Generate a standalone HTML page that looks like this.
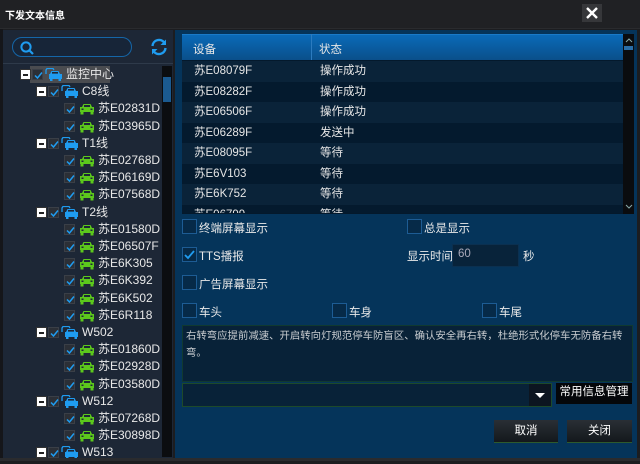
<!DOCTYPE html>
<html><head><meta charset="utf-8"><style>
*{margin:0;padding:0;box-sizing:border-box}
body{width:640px;height:461px;background:#1c1d20;position:relative;overflow:hidden;font-family:"Liberation Sans","Noto Sans CJK SC",sans-serif;color:#e6e6e6;font-size:12px}
.a{position:absolute}
.title{left:0;top:0;width:640px;height:29px;background:#202124;border-bottom:1px solid #2a2b2e}
.left{left:3px;top:30px;width:170px;height:428px;background:#1d2736}
.right{left:175px;top:30px;width:462px;height:428px;background:#05345a}
.row{position:absolute;height:17px;line-height:17px;font-size:12px;color:#e8e8e8;white-space:nowrap}
.mb{position:absolute;width:11px;height:11px;background:#fff;border:1px solid #333;top:3px}
.mb:after{content:"";position:absolute;left:2px;top:4px;width:5px;height:2px;background:#222}
.cb{position:absolute;width:11px;height:11px;background:#2b2f36;border:1px solid #3a3f47;top:3px}
.cb svg{position:absolute;left:0;top:0}
.tr{position:absolute;left:182px;width:441px;height:20.5px;line-height:20px;font-size:11.5px}
.tr span{position:absolute}
.ck{position:absolute;width:15px;height:15px;border:1px solid #1d5c94;background:#062a48}
.lbl{position:absolute;font-size:11.5px;color:#e8e8e8}
.btn{position:absolute;height:23px;background:linear-gradient(#2a2f35,#14181c);border-bottom:1px solid #2d5a2d;color:#fff;text-align:center;line-height:22px;font-size:11.5px}
</style></head><body>
<div class="a title"></div>
<div class="a" style="left:5px;top:7px;font-size:10px;color:#fff;font-weight:bold">下发文本信息</div>
<div class="a" style="left:582px;top:4px;width:20px;height:18px;background:#36373a"></div>
<svg class="a" style="left:584px;top:5px" width="16" height="16"><path d="M3 3L13 13M13 3L3 13" stroke="#fff" stroke-width="2.4"/></svg>
<div class="a" style="left:0;top:29px;width:3px;height:432px;background:#15161a"></div>
<div class="a left"></div>
<div class="a right"></div>
<div class="a" style="left:12px;top:37px;width:120px;height:20px;border:1.5px solid #1566a8;border-radius:10px;background:#172538"></div>
<svg class="a" style="left:19px;top:40px" width="16" height="16"><circle cx="7" cy="7" r="4.6" stroke="#1f9cf0" stroke-width="2" fill="none"/><path d="M10.5 10.5L14 14" stroke="#1f9cf0" stroke-width="2.2"/></svg>
<svg class="a" style="left:149px;top:37px" width="20" height="20"><path d="M3.5 9A6.5 6.5 0 0 1 15.5 6" stroke="#1f9cf0" stroke-width="2.4" fill="none"/><path d="M17 2.5L17 8L11.5 8Z" fill="#1f9cf0"/><path d="M16.5 11A6.5 6.5 0 0 1 4.5 14" stroke="#1f9cf0" stroke-width="2.4" fill="none"/><path d="M3 17.5L3 12L8.5 12Z" fill="#1f9cf0"/></svg>
<div class="a" style="left:3px;top:63px;width:170px;height:1px;background:#2e3a4a"></div>
<div class="a" style="left:162px;top:66px;width:10px;height:391px;background:#0b0d10"></div>
<div class="a" style="left:163px;top:77px;width:8px;height:25px;background:#1b5a90"></div>
<div class="a" style="left:30px;top:66px;width:80px;height:17px;background:#4a4c50"></div>
<div id="tree"></div>
<!-- table -->
<div class="a" style="left:182px;top:34px;width:441px;height:180px;background:#04192c"></div>
<div class="a" style="left:182px;top:34px;width:441px;height:26px;background:linear-gradient(#0a6ab8,#0a4f8a);border-top:1px solid #1a7ac8"></div>
<div class="a" style="left:311px;top:34px;width:1px;height:26px;background:#2c7bbf"></div>
<div class="a" style="left:193px;top:41px;font-size:11.5px">设备</div>
<div class="a" style="left:319px;top:41px;font-size:11.5px">状态</div>
<div id="rows"></div>
<div class="a" style="left:623px;top:34px;width:11px;height:180px;background:#0a0c0f"></div>
<div class="a" style="left:624px;top:46px;width:9px;height:4px;background:#2a6ea8"></div>
<svg class="a" style="left:624px;top:36px" width="10" height="8"><path d="M2 6L5 3L8 6" stroke="#8aa" fill="none"/></svg>
<svg class="a" style="left:624px;top:203px" width="10" height="8"><path d="M2 2L5 5L8 2" stroke="#8aa" fill="none"/></svg>
<!-- options -->
<div class="ck" style="left:182px;top:219px"></div><div class="lbl" style="left:199px;top:220px">终端屏幕显示</div>
<div class="ck" style="left:407px;top:219px"></div><div class="lbl" style="left:424px;top:220px">总是显示</div>
<div class="ck" style="left:182px;top:247px"><svg width="13" height="13"><path d="M2 7L5 10L11 3" stroke="#1f9cf0" stroke-width="1.8" fill="none"/></svg></div><div class="lbl" style="left:199px;top:248px">TTS播报</div>
<div class="lbl" style="left:407px;top:248px">显示时间</div>
<div class="a" style="left:452px;top:244px;width:67px;height:23px;background:#08233a;border:1px solid #0b3050"></div>
<div class="lbl" style="left:458px;top:248px;color:#aab">60</div>
<div class="lbl" style="left:523px;top:248px">秒</div>
<div class="ck" style="left:182px;top:275px"></div><div class="lbl" style="left:199px;top:276px">广告屏幕显示</div>
<div class="ck" style="left:182px;top:303px"></div><div class="lbl" style="left:199px;top:304px">车头</div>
<div class="ck" style="left:332px;top:303px"></div><div class="lbl" style="left:349px;top:304px">车身</div>
<div class="ck" style="left:482px;top:303px"></div><div class="lbl" style="left:499px;top:304px">车尾</div>
<div class="a" style="left:182px;top:325px;width:451px;height:57px;background:#082238;border:1px solid #103a30"></div>
<div class="a" style="left:186px;top:328px;width:445px;font-size:10.4px;line-height:17px;color:#c8ccd0">右转弯应提前减速、开启转向灯规范停车防盲区、确认安全再右转，杜绝形式化停车无防备右转弯。</div>
<div class="a" style="left:182px;top:383px;width:370px;height:24px;background:#082238;border:1px solid #1d4a2a"></div>
<div class="a" style="left:529px;top:384px;width:22px;height:22px;background:#0c1520"></div>
<svg class="a" style="left:534px;top:392px" width="12" height="8"><path d="M1 1L11 1L6 6Z" fill="#fff"/></svg>
<div class="a" style="left:556px;top:383px;width:76px;height:21px;background:#05070a;color:#fff;font-size:11.5px;line-height:18px;text-align:center">常用信息管理</div>
<div class="btn" style="left:494px;top:420px;width:64px">取消</div>
<div class="btn" style="left:567px;top:420px;width:65px">关闭</div>
<div class="a" style="left:0;top:458px;width:640px;height:3px;background:#2a2b2e"></div>
<script>
var car='<svg width="16" height="12" viewBox="0 0 16 12"><path d="M3 4L4.5 1H11.5L13 4H15V9H1V4Z" fill="#5cc81c"/><rect x="1.5" y="9" width="3" height="2.5" fill="#5cc81c"/><rect x="11.5" y="9" width="3" height="2.5" fill="#5cc81c"/><rect x="5" y="2" width="6" height="2" fill="#1d2736"/><rect x="2.5" y="5.5" width="2" height="1.5" fill="#1d2736"/><rect x="11.5" y="5.5" width="2" height="1.5" fill="#1d2736"/></svg>';
var bus='<svg width="18" height="13" viewBox="0 0 18 13"><path d="M1 6V2L2 0.5H8L9 2" stroke="#1f9cf0" stroke-width="1.3" fill="none"/><path d="M5 6L6.5 3H13.5L15 6H17V11H4V6Z" fill="#1f9cf0"/><rect x="7" y="4" width="6" height="1.6" fill="#1d2736"/><rect x="5" y="11" width="2.5" height="2" fill="#1f9cf0"/><rect x="13.5" y="11" width="2.5" height="2" fill="#1f9cf0"/></svg>';
var chk='<svg width="11" height="11"><path d="M2 5.5L4.5 8L9 2.5" stroke="#1f9cf0" stroke-width="1.5" fill="none"/></svg>';
var items=[[0,'监控中心'],[1,'C8线'],[2,'苏E02831D'],[2,'苏E03965D'],[1,'T1线'],[2,'苏E02768D'],[2,'苏E06169D'],[2,'苏E07568D'],[1,'T2线'],[2,'苏E01580D'],[2,'苏E06507F'],[2,'苏E6K305'],[2,'苏E6K392'],[2,'苏E6K502'],[2,'苏E6R118'],[1,'W502'],[2,'苏E01860D'],[2,'苏E02928D'],[2,'苏E03580D'],[1,'W512'],[2,'苏E07268D'],[2,'苏E30898D'],[1,'W513']];
var h='';
items.forEach(function(it,i){var y=66+i*17.2,l=it[0];var s='<div class="row" style="left:0;top:'+y+'px;width:160px">';
if(l<2){var mx=l==0?20:36;s+='<div class="mb" style="left:'+mx+'px"></div><div class="cb" style="left:'+(mx+12)+'px">'+chk+'</div><div style="position:absolute;left:'+(mx+25)+'px;top:2px">'+bus+'</div><div style="position:absolute;left:'+(mx+46)+'px">'+it[1]+'</div>';}
else{s+='<div class="cb" style="left:64px">'+chk+'</div><div style="position:absolute;left:79px;top:3px">'+car+'</div><div style="position:absolute;left:98px">'+it[1]+'</div>';}
h+=s+'</div>';});
document.getElementById('tree').innerHTML=h;
var r=[['苏E08079F','操作成功'],['苏E08282F','操作成功'],['苏E06506F','操作成功'],['苏E06289F','发送中'],['苏E08095F','等待'],['苏E6V103','等待'],['苏E6K752','等待'],['苏E06799','等待']];
var t='';r.forEach(function(x,i){var y=61+i*20.5;var hh=i==7?Math.max(0,213-y):20.5;t+='<div class="tr" style="top:'+y+'px;height:'+hh+'px;overflow:hidden;background:'+(i%2?'#041a2e':'#0a2339')+'"><span style="left:12px">'+x[0]+'</span><span style="left:138px">'+x[1]+'</span></div>';});
document.getElementById('rows').innerHTML=t;
</script>
</body></html>
